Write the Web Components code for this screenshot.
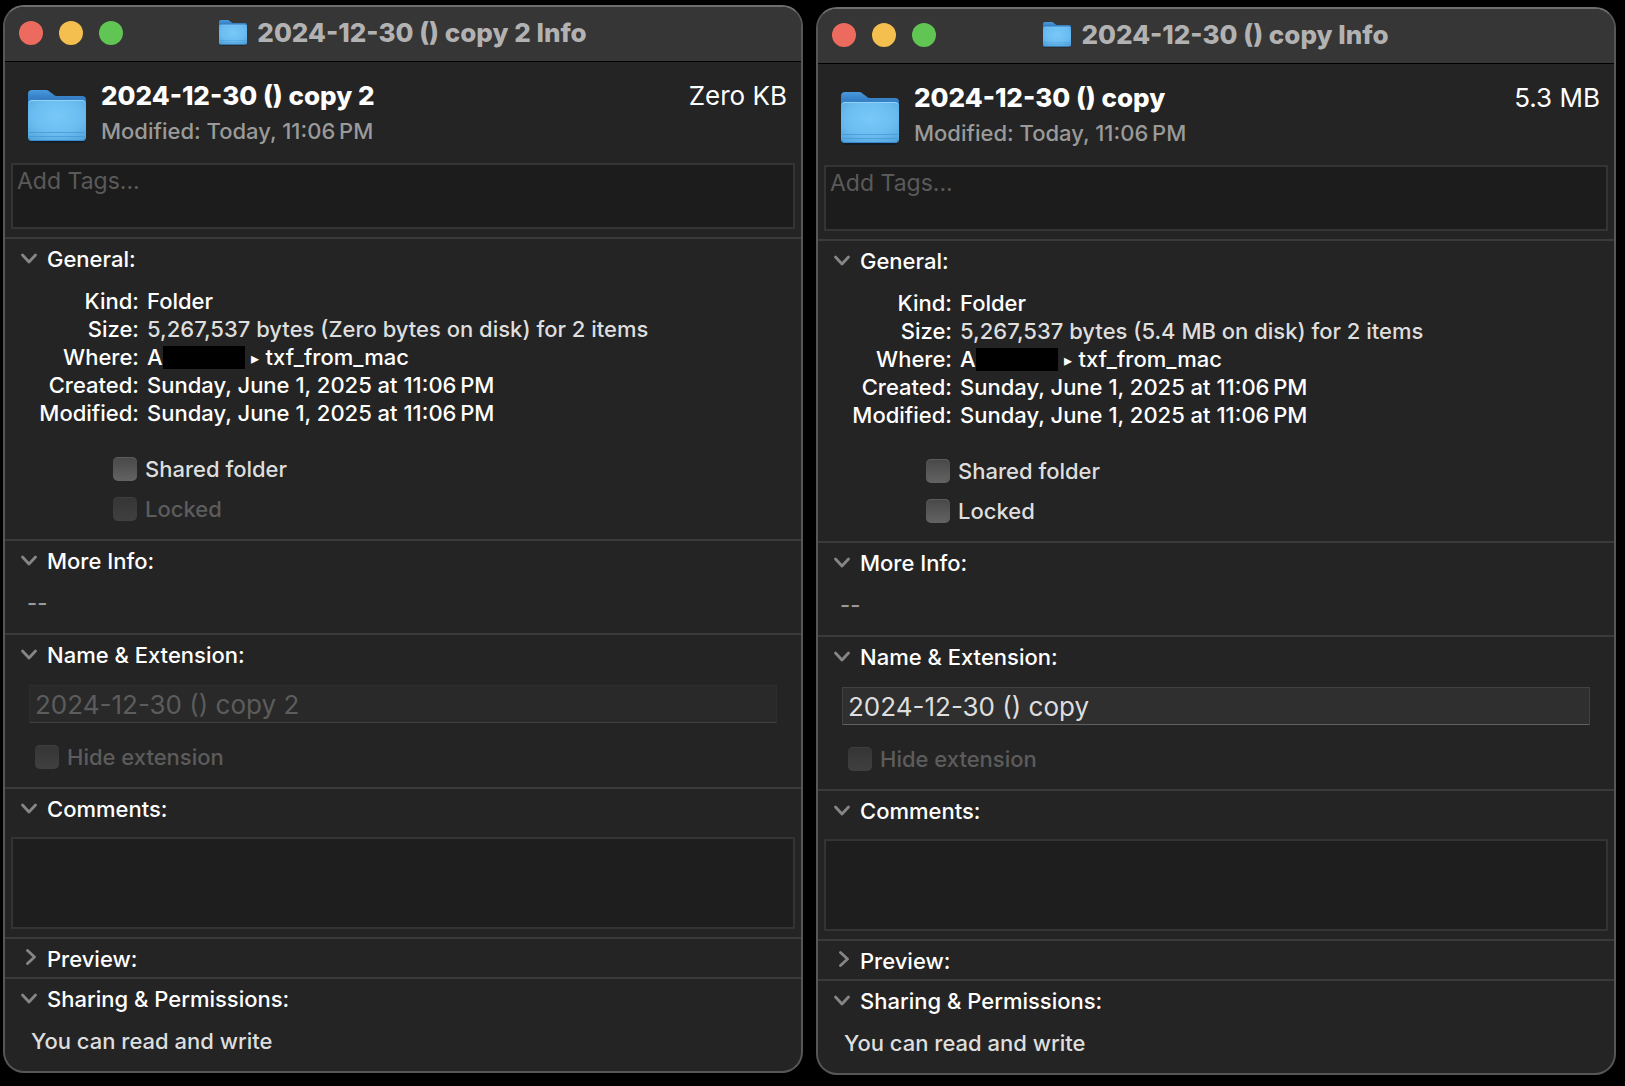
<!DOCTYPE html>
<html lang="en">
<head>
<meta charset="utf-8">
<title>Get Info</title>
<style>
  :root {
    --window-bg: #242424;
    --titlebar-bg: #363636;
    --edge: #565656;
    --line: #3a3a3a;
    --well-bg: #1c1c1c;
    --text: #ffffff;
    --text-soft: #dedede;
    --text-dim: #9a9a9a;
    --text-off: #5c5c5c;
  }

  body {
    margin: 0;
    background: #000;
    color: var(--text);
    font: 500 22px/28px Inter, "Liberation Sans", sans-serif;
  }

  .desktop {
    display: grid;
    grid-template-columns: 1fr 1fr;
    align-items: start;
    gap: 13px;
    padding: 5px 9px 9px 3px;
  }

  .desktop info-window + info-window {
    margin-top: 2px;
  }

  .redacted {
    display: inline-block;
    width: 82px;
    height: 23px;
    background: #000;
    vertical-align: -4px;
  }

  .arrow {
    font-size: 16px;
    margin: 0 7px 0 6px;
    vertical-align: 1px;
    line-height: 16px;
  }
</style>
</head>
<body>

<main class="desktop">
  <info-window name="2024-12-30 () copy 2" size="Zero KB" modified="Today, 11:06&#8239;PM">
    <info-section heading="General:" open>
      <info-list>
        <info-row label="Kind:">Folder</info-row>
        <info-row label="Size:" soft>5,267,537 bytes (Zero bytes on disk) for 2 items</info-row>
        <info-row label="Where:">A<span class="redacted"></span><span class="arrow">▸</span>txf_from_mac</info-row>
        <info-row label="Created:">Sunday, June 1, 2025 at 11:06&#8239;PM</info-row>
        <info-row label="Modified:">Sunday, June 1, 2025 at 11:06&#8239;PM</info-row>
      </info-list>
      <check-list inset>
        <check-item>Shared folder</check-item>
        <check-item disabled>Locked</check-item>
      </check-list>
    </info-section>
    <info-section heading="More Info:" open>
      <info-note dim>--</info-note>
    </info-section>
    <info-section heading="Name &amp; Extension:" open>
      <name-field value="2024-12-30 () copy 2" disabled></name-field>
      <check-list>
        <check-item disabled>Hide extension</check-item>
      </check-list>
    </info-section>
    <info-section heading="Comments:" open>
      <text-well label="Comments" size="large"></text-well>
    </info-section>
    <info-section heading="Preview:"></info-section>
    <info-section heading="Sharing &amp; Permissions:" open>
      <info-note>You can read and write</info-note>
    </info-section>
  </info-window>

  <info-window name="2024-12-30 () copy" size="5.3 MB" modified="Today, 11:06&#8239;PM">
    <info-section heading="General:" open>
      <info-list>
        <info-row label="Kind:">Folder</info-row>
        <info-row label="Size:" soft>5,267,537 bytes (5.4 MB on disk) for 2 items</info-row>
        <info-row label="Where:">A<span class="redacted"></span><span class="arrow">▸</span>txf_from_mac</info-row>
        <info-row label="Created:">Sunday, June 1, 2025 at 11:06&#8239;PM</info-row>
        <info-row label="Modified:">Sunday, June 1, 2025 at 11:06&#8239;PM</info-row>
      </info-list>
      <check-list inset>
        <check-item>Shared folder</check-item>
        <check-item>Locked</check-item>
      </check-list>
    </info-section>
    <info-section heading="More Info:" open>
      <info-note dim>--</info-note>
    </info-section>
    <info-section heading="Name &amp; Extension:" open>
      <name-field value="2024-12-30 () copy"></name-field>
      <check-list>
        <check-item disabled>Hide extension</check-item>
      </check-list>
    </info-section>
    <info-section heading="Comments:" open>
      <text-well label="Comments" size="large"></text-well>
    </info-section>
    <info-section heading="Preview:"></info-section>
    <info-section heading="Sharing &amp; Permissions:" open>
      <info-note>You can read and write</info-note>
    </info-section>
  </info-window>
</main>

<script>
function makeTemplate(html) {
  const template = document.createElement('template');
  template.innerHTML = html;
  return template;
}

const folderTemplate = makeTemplate(`
  <style>
    :host {
      display: block;
      width: 58px;
    }

    svg {
      display: block;
      width: 100%;
      overflow: visible;
    }
  </style>

  <svg viewBox="0 0 58 52" aria-hidden="true">
    <defs>
      <linearGradient id="back" x1="0" y1="0" x2="0" y2="1">
        <stop offset="0" stop-color="#4a9ade"/>
        <stop offset="0.25" stop-color="#3680c6"/>
      </linearGradient>
      <radialGradient id="front" cx="0.5" cy="0.4" r="0.7">
        <stop offset="0" stop-color="#79c8f8"/>
        <stop offset="0.6" stop-color="#6bbdf1"/>
        <stop offset="1" stop-color="#54a7e0"/>
      </radialGradient>
    </defs>
    <rect x="1" y="12" width="56" height="41" rx="4" fill="#101c28" opacity="0.7"/>
    <path d="M0 4a4 4 0 0 1 4-4h13c2 0 3 0 5 2l3 2c2 2 3 2 5 2h24a4 4 0 0 1 4 4v20H0z" fill="url(#back)"/>
    <rect x="0" y="10" width="58" height="41" rx="4" fill="url(#front)"/>
    <path d="M1 12.500q1-2 3-2h50q2 0 3 2" fill="none" stroke="#8fd2fb" stroke-width="1"/>
    <path d="M1 42.500h56M1 46.500h56" stroke="#4795cf" stroke-width="1" opacity="0.7"/>
    <path d="M1 48q1 2.500 3 2.500h50q2 0 3-2.500" fill="none" stroke="#3c8aca" stroke-width="1"/>
  </svg>
`);

class FolderIcon extends HTMLElement {
  constructor() {
    super();
    this.attachShadow({ mode: 'open' });
    this.shadowRoot.appendChild(folderTemplate.content.cloneNode(true));
  }
}

customElements.define('folder-icon', FolderIcon);

const wellTemplate = makeTemplate(`
  <style>
    :host {
      display: block;
      padding: 0 6px 8px;
    }

    textarea {
      display: block;
      box-sizing: border-box;
      width: 100%;
      height: 66px;
      margin: 0;
      padding: 2px 4px;
      border: 2px solid #343434;
      border-radius: 0;
      outline: none;
      resize: none;
      background: var(--well-bg);
      color: var(--text-soft);
      font: 400 23px/28px Inter, "Liberation Sans", sans-serif;
    }

    textarea::placeholder {
      color: #5a5a5a;
      opacity: 1;
    }

    :host([size="large"]) {
      padding-top: 10px;
    }

    :host([size="large"]) textarea {
      height: 92px;
      background: #1e1e1e;
    }
  </style>

  <textarea></textarea>
`);

class TextWell extends HTMLElement {
  constructor() {
    super();
    this.attachShadow({ mode: 'open' });
    this.shadowRoot.appendChild(wellTemplate.content.cloneNode(true));
    this.area = this.shadowRoot.querySelector('textarea');
  }

  connectedCallback() {
    this.area.setAttribute('aria-label', this.getAttribute('label'));
    this.area.placeholder = this.getAttribute('placeholder') || '';
  }
}

customElements.define('text-well', TextWell);

const windowTemplate = makeTemplate(`
  <style>
    :host {
      display: block;
      box-sizing: border-box;
      border: 2px solid var(--edge);
      border-top-color: #6e6e6e;
      border-radius: 21px;
      background: var(--window-bg);
      overflow: hidden;
    }

    .titlebar {
      display: grid;
      grid-template-columns: 1fr auto 1fr;
      align-items: center;
      height: 52px;
      padding: 0 14px 2px;
      background: var(--titlebar-bg);
      border-bottom: 1px solid #000;
    }

    .lights {
      display: flex;
      gap: 16px;
    }

    .lights button {
      width: 24px;
      height: 24px;
      padding: 0;
      border: none;
      border-radius: 50%;
    }

    .close { background: #ed6a5f; }
    .minimize { background: #f5bf4f; }
    .zoom { background: #61c554; }

    .title {
      display: flex;
      align-items: center;
      gap: 10px;
      color: #b2b2b2;
    }

    .title folder-icon {
      width: 28px;
    }

    h1, h2 {
      margin: 0;
      font-size: 26px;
      line-height: 32px;
      font-weight: 800;
    }

    .summary {
      display: grid;
      grid-template-columns: auto 1fr auto;
      column-gap: 15px;
      padding: 18px 14px 18px 23px;
    }

    .summary folder-icon {
      margin-top: 10px;
    }

    .modified {
      margin: 5px 0 0;
      color: var(--text-dim);
    }

    .size {
      font-size: 26px;
      line-height: 32px;
      font-weight: 400;
    }
  </style>

  <header class="titlebar">
    <div class="lights">
      <button class="close" aria-label="Close"></button>
      <button class="minimize" aria-label="Minimize"></button>
      <button class="zoom" aria-label="Zoom"></button>
    </div>
    <div class="title">
      <folder-icon></folder-icon>
      <h1></h1>
    </div>
  </header>
  <div class="summary">
    <folder-icon></folder-icon>
    <div>
      <h2></h2>
      <p class="modified"></p>
    </div>
    <span class="size"></span>
  </div>
  <text-well label="Tags" placeholder="Add Tags..."></text-well>
  <slot></slot>
`);

class InfoWindow extends HTMLElement {
  constructor() {
    super();
    this.attachShadow({ mode: 'open' });
    this.shadowRoot.appendChild(windowTemplate.content.cloneNode(true));
  }

  connectedCallback() {
    const name = this.getAttribute('name');
    this.shadowRoot.querySelector('h1').textContent = `${name} Info`;
    this.shadowRoot.querySelector('h2').textContent = name;
    this.shadowRoot.querySelector('.modified').textContent = `Modified: ${this.getAttribute('modified')}`;
    this.shadowRoot.querySelector('.size').textContent = this.getAttribute('size');
  }
}

customElements.define('info-window', InfoWindow);

const sectionTemplate = makeTemplate(`
  <style>
    :host {
      display: block;
      border-top: 2px solid var(--line);
    }

    h3 {
      margin: 0;
      font: inherit;
    }

    button {
      display: flex;
      align-items: center;
      gap: 8px;
      width: 100%;
      height: 38px;
      padding: 2px 14px 0;
      border: none;
      background: none;
      color: var(--text);
      font: inherit;
      text-align: left;
    }

    svg {
      width: 20px;
      height: 20px;
      fill: none;
      stroke: #868686;
      stroke-width: 2.800;
      stroke-linecap: round;
      stroke-linejoin: round;
    }

    .down { display: none; }
    :host([open]) .down { display: block; }
    :host([open]) .right { display: none; }

    .body { display: none; }
    :host([open]) .body { display: block; }
  </style>

  <h3>
    <button>
      <svg viewBox="0 0 20 20" aria-hidden="true">
        <path class="down" d="M3.500 6l6.500 7 6.500-7"/>
        <path class="right" d="M8.500 1.500l7 6.500-7 6.500"/>
      </svg>
      <span></span>
    </button>
  </h3>
  <div class="body"><slot></slot></div>
`);

class InfoSection extends HTMLElement {
  constructor() {
    super();
    this.attachShadow({ mode: 'open' });
    this.shadowRoot.appendChild(sectionTemplate.content.cloneNode(true));
    this.button = this.shadowRoot.querySelector('button');
    this.button.addEventListener('click', () => this.toggle());
  }

  connectedCallback() {
    this.shadowRoot.querySelector('span').textContent = this.getAttribute('heading');
    this.button.setAttribute('aria-expanded', this.hasAttribute('open'));
  }

  toggle() {
    const open = this.toggleAttribute('open');
    this.button.setAttribute('aria-expanded', open);
  }
}

customElements.define('info-section', InfoSection);

const listTemplate = makeTemplate(`
  <style>
    :host {
      display: block;
      padding-top: 10px;
    }
  </style>

  <slot></slot>
`);

class InfoList extends HTMLElement {
  constructor() {
    super();
    this.attachShadow({ mode: 'open' });
    this.shadowRoot.appendChild(listTemplate.content.cloneNode(true));
  }
}

customElements.define('info-list', InfoList);

const rowTemplate = makeTemplate(`
  <style>
    :host {
      display: grid;
      grid-template-columns: 134px 1fr;
      column-gap: 8px;
      height: 28px;
      white-space: nowrap;
    }

    .label {
      text-align: right;
    }

    :host([soft]) .value {
      color: var(--text-soft);
    }
  </style>

  <span class="label"></span>
  <span class="value"><slot></slot></span>
`);

class InfoRow extends HTMLElement {
  constructor() {
    super();
    this.attachShadow({ mode: 'open' });
    this.shadowRoot.appendChild(rowTemplate.content.cloneNode(true));
  }

  connectedCallback() {
    this.shadowRoot.querySelector('.label').textContent = this.getAttribute('label');
  }
}

customElements.define('info-row', InfoRow);

const checkListTemplate = makeTemplate(`
  <style>
    :host {
      display: flex;
      flex-direction: column;
      gap: 12px;
      padding: 20px 30px 16px;
    }

    :host([inset]) {
      padding: 28px 108px 16px;
    }
  </style>

  <slot></slot>
`);

class CheckList extends HTMLElement {
  constructor() {
    super();
    this.attachShadow({ mode: 'open' });
    this.shadowRoot.appendChild(checkListTemplate.content.cloneNode(true));
  }
}

customElements.define('check-list', CheckList);

const checkTemplate = makeTemplate(`
  <style>
    :host {
      display: flex;
    }

    label {
      display: flex;
      align-items: center;
      gap: 8px;
      color: var(--text-soft);
    }

    input {
      appearance: none;
      width: 24px;
      height: 24px;
      margin: 0;
      border-radius: 5px;
      background: linear-gradient(#484848, #636363);
      box-shadow: inset 0 1px 0 #5c5c5c;
    }

    input:checked {
      background: #0a7aff;
    }

    :host([disabled]) label {
      color: var(--text-off);
    }

    :host([disabled]) input {
      background: linear-gradient(#353535, #404040);
      box-shadow: inset 0 1px 0 #3e3e3e;
    }
  </style>

  <label><input type="checkbox"><span><slot></slot></span></label>
`);

class CheckItem extends HTMLElement {
  constructor() {
    super();
    this.attachShadow({ mode: 'open' });
    this.shadowRoot.appendChild(checkTemplate.content.cloneNode(true));
  }

  connectedCallback() {
    this.shadowRoot.querySelector('input').disabled = this.hasAttribute('disabled');
  }
}

customElements.define('check-item', CheckItem);

const noteTemplate = makeTemplate(`
  <style>
    :host {
      display: block;
      padding: 10px 26px 16px;
      color: var(--text-soft);
    }

    :host([dim]) {
      padding: 10px 22px 16px;
      color: var(--text-dim);
    }
  </style>

  <slot></slot>
`);

class InfoNote extends HTMLElement {
  constructor() {
    super();
    this.attachShadow({ mode: 'open' });
    this.shadowRoot.appendChild(noteTemplate.content.cloneNode(true));
  }
}

customElements.define('info-note', InfoNote);

const nameTemplate = makeTemplate(`
  <style>
    :host {
      display: block;
      padding: 12px 24px 0;
    }

    input {
      display: block;
      box-sizing: border-box;
      width: 100%;
      height: 38px;
      margin: 0;
      padding: 0 5px;
      border: 1px solid #404040;
      border-bottom-color: #606060;
      border-radius: 0;
      outline: none;
      background: #2f2f2f;
      color: var(--text-soft);
      font: 400 26px/32px Inter, "Liberation Sans", sans-serif;
    }

    input:disabled {
      border-color: #2e2e2e;
      border-bottom-color: #404040;
      background: #292929;
      color: var(--text-off);
    }
  </style>

  <input type="text" aria-label="Name">
`);

class NameField extends HTMLElement {
  constructor() {
    super();
    this.attachShadow({ mode: 'open' });
    this.shadowRoot.appendChild(nameTemplate.content.cloneNode(true));
    this.input = this.shadowRoot.querySelector('input');
  }

  connectedCallback() {
    this.input.value = this.getAttribute('value');
    this.input.disabled = this.hasAttribute('disabled');
  }
}

customElements.define('name-field', NameField);
</script>
</body>
</html>
